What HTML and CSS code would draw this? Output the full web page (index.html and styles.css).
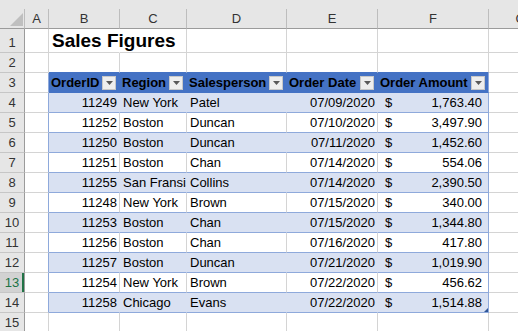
FILE: index.html
```html
<!DOCTYPE html>
<html>
<head>
<meta charset="utf-8">
<link rel="stylesheet" href="styles.css">
</head>
<body>
<div class="topbar"></div>
<div class="sheet">
  <div class="corner"><svg class="tri" width="13" height="13" viewBox="0 0 13 13"><polygon points="13,0 13,13 0,13" fill="#BFBFBF"/></svg></div>
  <div class="ch">A</div><div class="ch">B</div><div class="ch">C</div><div class="ch">D</div><div class="ch">E</div><div class="ch">F</div><div class="ch">G</div>

  <div class="rh">1</div><div class="c"></div><div class="c title">Sales Figures</div><div class="c"></div><div class="c"></div><div class="c"></div><div class="c"></div><div class="c"></div>

  <div class="rh">2</div><div class="c"></div><div class="c above"></div><div class="c above"></div><div class="c above"></div><div class="c above"></div><div class="c above"></div><div class="c"></div>

  <div class="rh">3</div><div class="c edge"></div>
  <div class="c th"><span>OrderID</span><span class="dd"><svg width="7" height="4" viewBox="0 0 7 4"><polygon points="0,0 7,0 3.5,4" fill="#595959"/></svg></span></div>
  <div class="c th"><span>Region</span><span class="dd"><svg width="7" height="4" viewBox="0 0 7 4"><polygon points="0,0 7,0 3.5,4" fill="#595959"/></svg></span></div>
  <div class="c th"><span>Salesperson</span><span class="dd"><svg width="7" height="4" viewBox="0 0 7 4"><polygon points="0,0 7,0 3.5,4" fill="#595959"/></svg></span></div>
  <div class="c th"><span>Order Date</span><span class="dd"><svg width="7" height="4" viewBox="0 0 7 4"><polygon points="0,0 7,0 3.5,4" fill="#595959"/></svg></span></div>
  <div class="c th thlast"><span>Order Amount</span><span class="dd"><svg width="7" height="4" viewBox="0 0 7 4"><polygon points="0,0 7,0 3.5,4" fill="#595959"/></svg></span></div>
  <div class="c"></div>

  <div class="rh">4</div><div class="c edge"></div><div class="c band r">11249</div><div class="c band l">New York</div><div class="c band l">Patel</div><div class="c band r">07/09/2020</div><div class="c band last amt"><span>$</span><span>1,763.40</span></div><div class="c"></div>

  <div class="rh">5</div><div class="c edge"></div><div class="c plain r">11252</div><div class="c plain l">Boston</div><div class="c plain l">Duncan</div><div class="c plain r">07/10/2020</div><div class="c plain last amt"><span>$</span><span>3,497.90</span></div><div class="c"></div>

  <div class="rh">6</div><div class="c edge"></div><div class="c band r">11250</div><div class="c band l">Boston</div><div class="c band l">Duncan</div><div class="c band r">07/11/2020</div><div class="c band last amt"><span>$</span><span>1,452.60</span></div><div class="c"></div>

  <div class="rh">7</div><div class="c edge"></div><div class="c plain r">11251</div><div class="c plain l">Boston</div><div class="c plain l">Chan</div><div class="c plain r">07/14/2020</div><div class="c plain last amt"><span>$</span><span>554.06</span></div><div class="c"></div>

  <div class="rh">8</div><div class="c edge"></div><div class="c band r">11255</div><div class="c band l">San Fransisco</div><div class="c band l">Collins</div><div class="c band r">07/14/2020</div><div class="c band last amt"><span>$</span><span>2,390.50</span></div><div class="c"></div>

  <div class="rh">9</div><div class="c edge"></div><div class="c plain r">11248</div><div class="c plain l">New York</div><div class="c plain l">Brown</div><div class="c plain r">07/15/2020</div><div class="c plain last amt"><span>$</span><span>340.00</span></div><div class="c"></div>

  <div class="rh">10</div><div class="c edge"></div><div class="c band r">11253</div><div class="c band l">Boston</div><div class="c band l">Chan</div><div class="c band r">07/15/2020</div><div class="c band last amt"><span>$</span><span>1,344.80</span></div><div class="c"></div>

  <div class="rh">11</div><div class="c edge"></div><div class="c plain r">11256</div><div class="c plain l">Boston</div><div class="c plain l">Chan</div><div class="c plain r">07/16/2020</div><div class="c plain last amt"><span>$</span><span>417.80</span></div><div class="c"></div>

  <div class="rh">12</div><div class="c edge"></div><div class="c band r">11257</div><div class="c band l">Boston</div><div class="c band l">Duncan</div><div class="c band r">07/21/2020</div><div class="c band last amt"><span>$</span><span>1,019.90</span></div><div class="c"></div>

  <div class="rh sel">13</div><div class="c edge"></div><div class="c plain r">11254</div><div class="c plain l">New York</div><div class="c plain l">Brown</div><div class="c plain r">07/22/2020</div><div class="c plain last amt"><span>$</span><span>456.62</span></div><div class="c"></div>

  <div class="rh">14</div><div class="c edge"></div><div class="c band r">11258</div><div class="c band l">Chicago</div><div class="c band l">Evans</div><div class="c band r">07/22/2020</div><div class="c band last amt corner-cell"><span>$</span><span>1,514.88</span><i class="handle"></i></div><div class="c"></div>

  <div class="rh">15</div><div class="c"></div><div class="c"></div><div class="c"></div><div class="c"></div><div class="c"></div><div class="c"></div><div class="c"></div>
</div>
</body>
</html>
```

FILE: styles.css
```css
html, body {
  margin: 0;
  padding: 0;
  overflow: hidden;
  background: #ffffff;
}
body {
  font-family: "Liberation Sans", Arial, sans-serif;
  font-size: 13px;
  color: #000;
}
.topbar {
  height: 9px;
  background: #E6E6E6;
}
.sheet {
  display: grid;
  grid-template-columns: 25px 24px 71px 67px 100px 91px 111px 64px;
  grid-template-rows: 20px 24px repeat(14, 20px);
  width: 553px;
}
.sheet > div {
  box-sizing: border-box;
  border-right: 1px solid #D4D4D4;
  border-bottom: 1px solid #D4D4D4;
  display: flex;
  align-items: flex-end;
  line-height: 18px;
  white-space: nowrap;
  overflow: hidden;
  min-width: 0;
}
.sheet > .corner {
  background: #E6E6E6;
  border-right-color: #BDBDBD;
  border-bottom-color: #9B9B9B;
  position: relative;
}
.tri {
  position: absolute;
  right: 1px;
  bottom: 2px;
}
.sheet > .ch {
  background: #E6E6E6;
  border-right-color: #BDBDBD;
  border-bottom-color: #9B9B9B;
  justify-content: center;
  color: #333;
}
.sheet > .rh {
  background: #E6E6E6;
  border-right-color: #9B9B9B;
  border-bottom-color: #C6C6C6;
  justify-content: center;
  color: #333;
}
.sheet > .rh.sel {
  background: #D2D2D2;
  color: #217346;
  box-shadow: inset -2px 0 #217346;
}
.sheet > .title {
  overflow: visible;
  font-weight: bold;
  font-size: 19px;
  line-height: 22px;
  padding-left: 3px;
  border-right-color: transparent;
}
.sheet > .above {
  border-bottom-color: #4472C4;
}
.sheet > .edge {
  border-right-color: #8EA9DB;
}
.sheet > .th {
  background: #4472C4;
  border-right-color: #4472C4;
  border-bottom-color: #4472C4;
  font-weight: bold;
  justify-content: space-between;
  padding-left: 2px;
}
.sheet > .thlast {
  border-right-color: #8EA9DB;
}
.dd {
  box-sizing: border-box;
  width: 14px;
  height: 14px;
  flex: none;
  align-self: center;
  margin-right: 3px;
  background: #EEEEEE;
  border: 1px solid #C8C8C8;
  display: flex;
  align-items: center;
  justify-content: center;
}
.dd svg {
  display: block;
}
.sheet > .band {
  background: #D9E1F2;
  border-right-color: #D9E1F2;
  border-bottom-color: #8EA9DB;
}
.sheet > .plain {
  background: #FFFFFF;
  border-bottom-color: #8EA9DB;
}
.sheet > .last {
  border-right-color: #8EA9DB;
}
.sheet > .r {
  justify-content: flex-end;
  padding-right: 2px;
}
.sheet > .l {
  padding-left: 3px;
}
.sheet > .amt {
  justify-content: space-between;
  padding-left: 7px;
  padding-right: 6px;
}
.sheet > .corner-cell {
  position: relative;
}
.handle {
  position: absolute;
  right: 0;
  bottom: 0;
  width: 4px;
  height: 4px;
  background: #2F5597;
  clip-path: polygon(100% 0, 100% 100%, 0 100%);
}
```
